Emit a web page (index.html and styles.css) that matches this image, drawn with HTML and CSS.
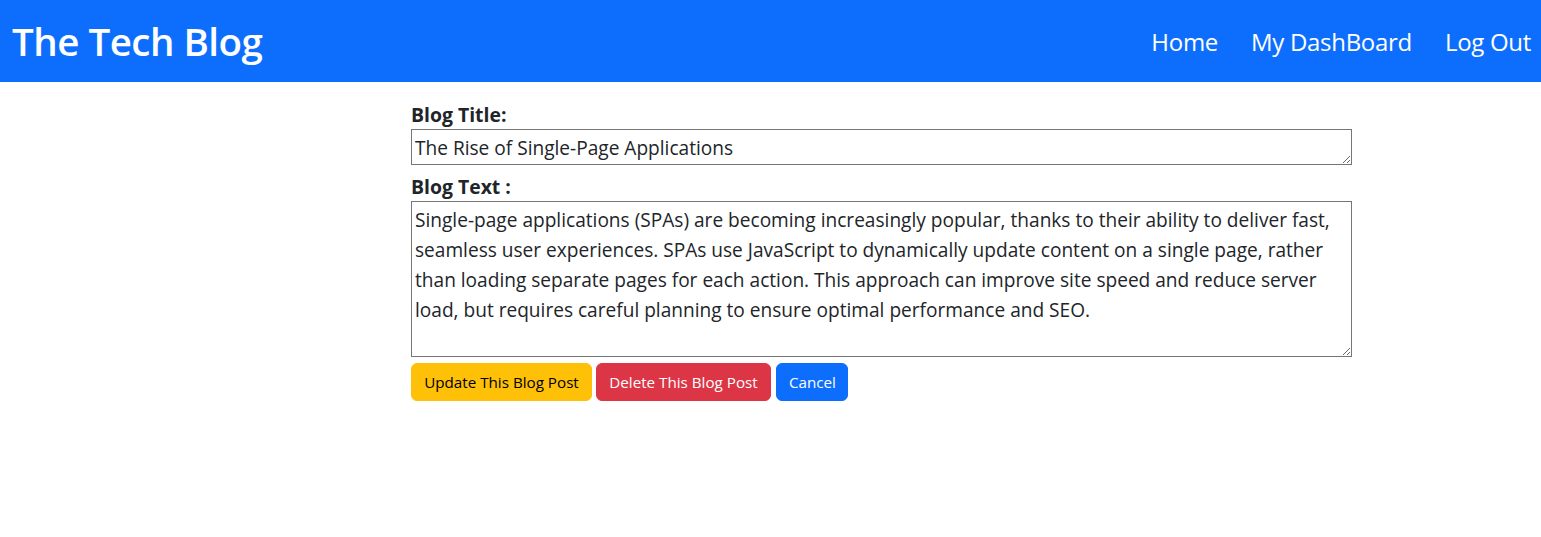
FILE: index.html
```html
<!DOCTYPE html>
<html lang="en">
<head>
<meta charset="utf-8">
<title>The Tech Blog</title>
<link rel="stylesheet" href="styles.css">
</head>
<body>
<header class="topbar">
  <h1 class="brand">The Tech Blog</h1>
  <nav class="nav">
    <a href="#" class="nav-link">Home</a>
    <a href="#" class="nav-link">My DashBoard</a>
    <a href="#" class="nav-link">Log Out</a>
  </nav>
</header>
<main class="page">
  <form class="post-form">
    <label class="field-label" for="title">Blog Title:</label>
    <textarea id="title" class="field field-title" rows="1">The Rise of Single-Page Applications</textarea>
    <label class="field-label" for="body">Blog Text :</label>
    <textarea id="body" class="field field-body" rows="5">Single-page applications (SPAs) are becoming increasingly popular, thanks to their ability to deliver fast, seamless user experiences. SPAs use JavaScript to dynamically update content on a single page, rather than loading separate pages for each action. This approach can improve site speed and reduce server load, but requires careful planning to ensure optimal performance and SEO.</textarea>
    <div class="actions">
      <button type="button" class="btn btn-warning">Update This Blog Post</button>
      <button type="button" class="btn btn-danger">Delete This Blog Post</button>
      <button type="button" class="btn btn-primary">Cancel</button>
    </div>
  </form>
</main>
</body>
</html>
```
FILE: styles.css
```css
* { box-sizing: border-box; }
body {
  margin: 0;
  font-family: "Open Sans", "Noto Sans", sans-serif;
  color: #212529;
  background: #fff;
}
.topbar {
  height: 82px;
  background: #0d6efd;
  display: flex;
  align-items: center;
  justify-content: space-between;
  padding: 0 10px 0 12px;
  color: #fff;
}
.brand {
  margin: 0;
  font-size: 38.5px;
  font-weight: 600;
  line-height: 1.2;
  letter-spacing: -0.5px;
}
.nav {
  display: flex;
  gap: 33px;
}
.nav-link {
  color: #fff;
  text-decoration: none;
  font-size: 24px;
  letter-spacing: -0.3px;
}
.page {
  padding: 17px 0 0 411px;
}
.post-form {
  width: 941px;
  display: flex;
  flex-direction: column;
}
.field-label {
  font-weight: 700;
  font-size: 19.4px;
  line-height: 30px;
  height: 30px;
  padding-top: 1px;
}
.field {
  display: block;
  width: 100%;
  border: 1px solid #767676;
  border-radius: 0;
  padding: 3px 3px 1px;
  font-family: "Open Sans", "Noto Sans", sans-serif;
  font-size: 19.1px;
  line-height: 30px;
  color: #212529;
  resize: vertical;
  margin: 0;
}
.field-title { height: 36px; margin-bottom: 6px; }
.field-body { height: 156px; }
.actions {
  display: flex;
  gap: 4px;
  margin-top: 6px;
}
.btn {
  font-family: "Open Sans", "Noto Sans", sans-serif;
  font-size: 15.2px;
  line-height: 24px;
  padding: 6px 12px;
  border: 1px solid transparent;
  border-radius: 6px;
  cursor: pointer;
}
.btn-warning { background: #ffc107; border-color: #ffc107; color: #000; width: 181px; }
.btn-danger { background: #dc3545; border-color: #dc3545; color: #fff; width: 175px; }
.btn-primary { background: #0d6efd; border-color: #0d6efd; color: #fff; width: 72px; margin-left: 1px; }
```
